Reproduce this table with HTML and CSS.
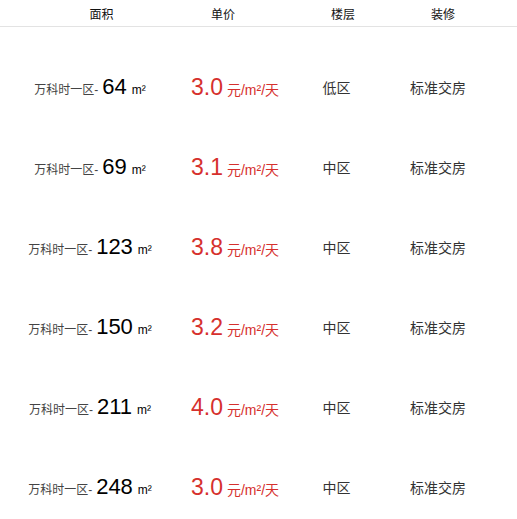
FILE: index.html
```html
<!DOCTYPE html>
<html>
<head>
<meta charset="utf-8">
<link rel="stylesheet" href="styles.css">
</head>
<body>
<div class="head">
  <div class="h h1">面积</div>
  <div class="h h2">单价</div>
  <div class="h h3">楼层</div>
  <div class="h h4">装修</div>
</div>
<div class="list">
  <div class="row">
    <div class="c c1"><span class="name">万科时一区-</span><span class="area">64</span><span class="unit">m²</span></div>
    <div class="c c2"><span class="price">3.0</span><span class="punit">元/m²/天</span></div>
    <div class="c c3">低区</div>
    <div class="c c4">标准交房</div>
  </div>
  <div class="row">
    <div class="c c1"><span class="name">万科时一区-</span><span class="area">69</span><span class="unit">m²</span></div>
    <div class="c c2"><span class="price">3.1</span><span class="punit">元/m²/天</span></div>
    <div class="c c3">中区</div>
    <div class="c c4">标准交房</div>
  </div>
  <div class="row">
    <div class="c c1"><span class="name">万科时一区-</span><span class="area">123</span><span class="unit">m²</span></div>
    <div class="c c2"><span class="price">3.8</span><span class="punit">元/m²/天</span></div>
    <div class="c c3">中区</div>
    <div class="c c4">标准交房</div>
  </div>
  <div class="row">
    <div class="c c1"><span class="name">万科时一区-</span><span class="area">150</span><span class="unit">m²</span></div>
    <div class="c c2"><span class="price">3.2</span><span class="punit">元/m²/天</span></div>
    <div class="c c3">中区</div>
    <div class="c c4">标准交房</div>
  </div>
  <div class="row">
    <div class="c c1"><span class="name">万科时一区-</span><span class="area">211</span><span class="unit">m²</span></div>
    <div class="c c2"><span class="price">4.0</span><span class="punit">元/m²/天</span></div>
    <div class="c c3">中区</div>
    <div class="c c4">标准交房</div>
  </div>
  <div class="row">
    <div class="c c1"><span class="name">万科时一区-</span><span class="area">248</span><span class="unit">m²</span></div>
    <div class="c c2"><span class="price">3.0</span><span class="punit">元/m²/天</span></div>
    <div class="c c3">中区</div>
    <div class="c c4">标准交房</div>
  </div>
</div>
</body>
</html>
```
FILE: styles.css
```css
html, body {
  margin: 0;
  padding: 0;
  background: #fff;
}
body {
  font-family: "Liberation Sans", "Noto Sans CJK SC", sans-serif;
  color: #333;
}
.head {
  display: grid;
  grid-template-columns: 121px 122px 118px 82px;
  padding-left: 41px;
  height: 26px;
  border-bottom: 1px solid #e3e3e3;
  align-items: end;
}
.h {
  text-align: center;
  font-size: 12px;
  line-height: 12px;
  color: #111;
  padding-bottom: 5px;
}
.list {
  padding-top: 20px;
}
.row {
  display: grid;
  grid-template-columns: 180px 110px 93px 110px;
  height: 80px;
  align-items: center;
}
.c {
  text-align: center;
  white-space: nowrap;
}
.c1 {
  display: flex;
  justify-content: center;
  align-items: baseline;
}
.name {
  font-size: 12px;
  color: #444;
}
.area {
  font-size: 22px;
  color: #000;
  margin-left: 4px;
}
.unit {
  font-size: 12px;
  color: #000;
  margin-left: 5px;
}
.c2 {
  display: flex;
  justify-content: center;
  align-items: baseline;
  color: #d6302d;
}
.price {
  font-size: 23px;
}
.punit {
  font-size: 14px;
  margin-left: 4px;
}
.c3, .c4 {
  font-size: 14px;
  color: #333;
}
```
